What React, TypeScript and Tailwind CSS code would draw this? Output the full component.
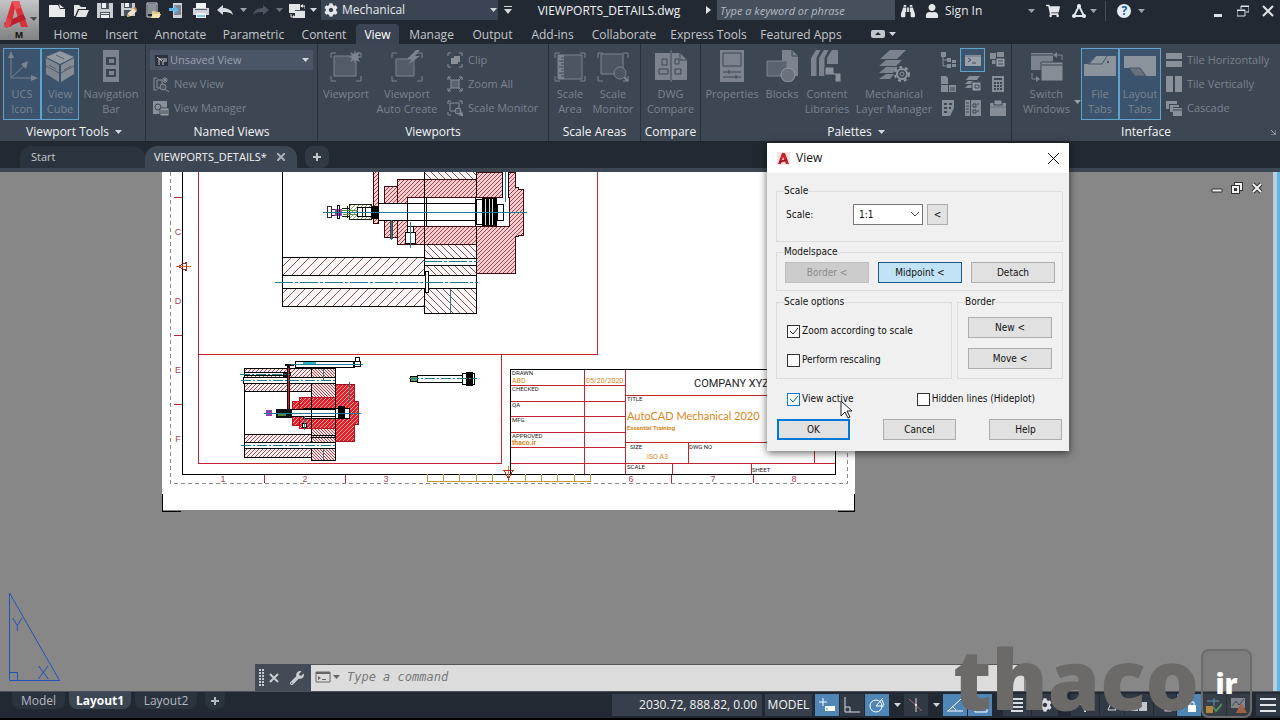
import React from 'react';
import { FaShoppingCart, FaUser, FaCog, FaWrench, FaBinoculars } from 'react-icons/fa';

type IconProps = { children: React.ReactNode; size?: number; className?: string };

function Icon({ children, size = 16, className = '' }: IconProps) {
  return (
    <svg
      width={size}
      height={size}
      viewBox={`0 0 ${size} ${size}`}
      fill="none"
      stroke="none"
      className={`shrink-0 ${className}`}
      aria-hidden="true"
    >
      {children}
    </svg>
  );
}

function Caret({ className = 'text-gray-300' }: { className?: string }) {
  return (
    <svg width="7" height="4" viewBox="0 0 7 4" className={`shrink-0 ${className}`} aria-hidden="true">
      <path d="M0 0h7L3.5 4z" fill="currentColor" />
    </svg>
  );
}

/* ---------- quick access icons ---------- */

const quickIcons: { label: string; icon: React.ReactNode }[] = [
  { label: 'New', icon: <path d="M0 3h9l2 4h5v8H0zM10 2l5 4h-4z" fill="#e8eaec" /> },
  { label: 'Open', icon: <path d="M1 3h5l2 2h5v2H5l-3 7H1zM6 8h10l-3 7H3z" fill="#e2e4e6" /> },
  {
    label: 'Save',
    icon: (
      <>
        <path d="M0 1h16v15H0z" fill="#c9ccd0" />
        <path d="M4 1h8v6H4zM3 10h10v6H3z" fill="#4a525e" />
        <path d="M5 1h4v5H5zM4 11h8v1H4zM4 13h8v3H4z" fill="#eceef0" />
      </>
    ),
  },
  {
    label: 'Save As',
    icon: (
      <>
        <path d="M0 1h14v13H0z" fill="#c9ccd0" />
        <path d="M3 1h8v5H3zM3 8h7v6H3z" fill="#4a525e" />
        <path d="M4 1h4v4H4z" fill="#eceef0" />
        <path d="M6 15l1-4 6-5 3 3-6 5z" fill="#f0e3cf" />
        <path d="M12 6l2-1 2 2-1 2z" fill="#e08a4a" />
        <path d="M6 15l1-3 2 2z" fill="#e0a13c" />
      </>
    ),
  },
  {
    label: 'Open from Web',
    icon: (
      <>
        <path d="M2 1h10v14H2z" stroke="#d8dadc" />
        <path d="M3 2h8v10H3z" fill="#8b9097" />
        <path d="M7 9h3l1 1h4v5H7z" fill="#e2c98c" />
        <path d="M8 12h8l-2 4H6z" fill="#f5e3a8" />
      </>
    ),
  },
  {
    label: 'Save to Web',
    icon: (
      <>
        <path d="M4 1h9v15H4z" fill="#cfd2d6" />
        <path d="M5 3h7v10H5z" fill="#7e858f" />
        <path d="M0 6h5V3l5 5-5 4V9H0z" fill="#63b3e8" />
      </>
    ),
  },
  {
    label: 'Plot',
    icon: (
      <>
        <path d="M3 1h10v5H3z" fill="#f0f1f2" />
        <path d="M0 6h16v7H0z" fill="#cfd2d6" />
        <path d="M2 7h12v1H2z" fill="#59616c" />
        <path d="M3 11h10v5H3z" fill="#e6f3fa" />
        <path d="M4 13h8v2H4z" fill="#8cc6e6" />
      </>
    ),
  },
  { label: 'Undo', icon: <path d="M0 8l6-5v3c5 0 9 2 10 7-3-3-6-3-10-3v3z" fill="#d9dce0" /> },
];

const redoIcon = <path d="M16 8l-6-5v3c-5 0-9 2-10 7 3-3 6-3 10-3v3z" fill="#4b5460" />;

const switchIcon = (
  <>
    <path d="M0 2h11v9H0zM6 8h10v8H6z" fill="#e2e4e6" />
    <path d="M6 8h10v1H6z" fill="#4a525e" />
    <path d="M12 4h4v3M2 12v3h3" stroke="#e2e4e6" />
    <path d="M14 2v4l-3-2zM4 13l3 2-3 2z" fill="#e2e4e6" />
  </>
);

function AppLogo() {
  return (
    <button
      aria-label="Application menu"
      className="h-10 w-[39px] self-start bg-gradient-to-b from-[#c4c5c6] to-[#808183]"
    >
      <svg width="39" height="40" viewBox="0 0 39 40" aria-hidden="true">
        <path d="M12 1h7l9 26h-7L15 8 11 27H4z" fill="#d9303a" />
        <path d="M12 1h7l2 7-6 1z" fill="#e9545a" />
        <path d="M4 23l19-9 3 5-20 9z" fill="#b81f2b" />
        <path d="M4 27l3-9 5 2-2 7z" fill="#e0434a" />
        <path d="M30 17h7l-3 4z" fill="#444a52" />
        <text x="19" y="38" textAnchor="middle" fontSize="9" fontWeight="700" fill="#111">
          M
        </text>
      </svg>
    </button>
  );
}

function TitleBar() {
  return (
    <header className="flex h-[22px] items-start">
      <div className="flex h-5 items-center pl-1.5">
        {quickIcons.map((q) => (
          <button key={q.label} aria-label={q.label} className="flex w-6 justify-center">
            <Icon>{q.icon}</Icon>
          </button>
        ))}
        <span className="flex w-3 justify-center"><Caret className="text-gray-400" /></span>
        <button aria-label="Redo" className="flex w-6 justify-center"><Icon>{redoIcon}</Icon></button>
        <span className="flex w-3 justify-center"><Caret className="text-gray-500" /></span>
        <button aria-label="Switch window" className="flex w-6 justify-center"><Icon>{switchIcon}</Icon></button>
        <span className="flex w-2 justify-center"><Caret /></span>
      </div>
      <label className="relative ml-1 flex h-5 w-[177px] items-center bg-[#3b4453] pl-[3px]">
        <FaCog size={14} className="text-gray-200" />
        <select
          aria-label="Workspace"
          className="h-5 flex-1 appearance-none bg-transparent pl-1 text-gray-200 outline-none"
        >
          <option>Mechanical</option>
        </select>
        <Caret className="pointer-events-none absolute right-px text-gray-300" />
      </label>
      <span className="flex h-5 w-5 items-center justify-center">
        <svg width="8" height="8" viewBox="0 0 8 8"><path d="M0 0h8v1H0zM0 3h8L4 8z" fill="#d3d6da" /></svg>
      </span>
      <h1 className="w-[182px] text-center leading-[22px] text-gray-100">VIEWPORTS_DETAILS.dwg</h1>
      <span className="flex h-5 w-[17px] items-center justify-center">
        <svg width="5" height="8" viewBox="0 0 5 8"><path d="M0 0l5 4-5 4z" fill="#e3e5e8" /></svg>
      </span>
      <input
        aria-label="Search"
        placeholder="Type a keyword or phrase"
        className="h-5 w-[178px] bg-[#46505c] px-[3px] text-[11px] italic outline-none placeholder:text-[#b4bac2]"
      />
      <div className="flex h-[21px] flex-1 items-center text-gray-200">
        <button aria-label="Find" className="flex w-[26px] justify-center"><FaBinoculars size={14} /></button>
        <button className="flex items-center gap-1.5 pl-1">
          <FaUser size={14} />
          Sign In
        </button>
        <span className="max-w-[46px] flex-1" />
        <Caret className="text-gray-400" />
        <button aria-label="App store" className="flex w-9 justify-center"><FaShoppingCart size={14} /></button>
        <button aria-label="Autodesk account" className="flex w-4 justify-center">
          <Icon>
            <path d="M8 3L3 13h10z" stroke="#d9e3ec" strokeWidth="2" />
            <circle cx="8" cy="3" r="2" fill="#e6edf3" />
            <circle cx="3" cy="13" r="2" fill="#e6edf3" />
            <circle cx="13" cy="13" r="2" fill="#e6edf3" />
          </Icon>
        </button>
        <span className="flex w-3 justify-center"><Caret className="text-gray-400" /></span>
        <span className="ml-1.5 h-5 w-px bg-[#454d58]" />
        <button
          aria-label="Help"
          className="ml-[11px] h-3.5 w-3.5 rounded-full bg-[#e6eef5] text-center text-xs leading-[14px] font-bold text-[#245a8c]"
        >
          ?
        </button>
        <span className="flex w-5 justify-center"><Caret className="text-gray-400" /></span>
        <div className="ml-auto flex">
          <button aria-label="Minimize" className="flex w-[25px] justify-center">
            <Icon size={12}><path d="M2 9h8v3H2z" fill="#dfe2e5" /></Icon>
          </button>
          <button aria-label="Restore" className="flex w-[25px] justify-center">
            <Icon size={12}>
              <path d="M4 4V1h8v6H9M0 5h8v6H0z" stroke="#dfe2e5" />
              <path d="M4 1h8v1H4zM0 5h8v1H0z" fill="#dfe2e5" />
            </Icon>
          </button>
          <button aria-label="Close" className="flex w-[25px] justify-center">
            <Icon size={12}><path d="M1 1l10 10M11 1L1 11" stroke="#dfe2e5" strokeWidth="2" /></Icon>
          </button>
        </div>
      </div>
    </header>
  );
}

const menuTabs: { label: string; width: string }[] = [
  { label: 'Home', width: 'w-[53px]' },
  { label: 'Insert', width: 'w-[49px]' },
  { label: 'Annotate', width: 'w-[69px]' },
  { label: 'Parametric', width: 'w-[77px]' },
  { label: 'Content', width: 'w-[64px]' },
  { label: 'View', width: 'w-[43px]' },
  { label: 'Manage', width: 'w-[65px]' },
  { label: 'Output', width: 'w-[57px]' },
  { label: 'Add-ins', width: 'w-[63px]' },
  { label: 'Collaborate', width: 'w-[80px]' },
  { label: 'Express Tools', width: 'w-[89px]' },
  { label: 'Featured Apps', width: 'w-[96px]' },
];

function MenuTabs() {
  return (
    <nav className="flex h-[22px] items-end pl-[5px]">
      {menuTabs.map((t) => (
        <button
          key={t.label}
          className={`h-5 shrink-0 rounded-t-sm pt-0.5 text-center leading-[18px] whitespace-nowrap ${t.width} ${
            t.label === 'View' ? 'bg-[#3b4453] text-white' : 'text-[#c3c7cc]'
          }`}
        >
          {t.label}
        </button>
      ))}
      <button aria-label="Minimize ribbon" className="ml-[22px] flex h-5 items-center gap-1">
        <svg width="14" height="8" viewBox="0 0 14 8">
          <rect width="14" height="8" rx="2" fill="#c3c7cc" />
          <path d="M4 5h6L7 2z" fill="#222a33" />
        </svg>
        <Caret />
      </button>
    </nav>
  );
}

/* ---------- ribbon icons ---------- */

const BRACKETS = 'M1 8V3h5M26 3h5v5M31 26v5h-5M6 31H1v-5';

const ucsIcon = (
  <>
    <path d="M5 4v24h24M6 27l14-13" stroke="currentColor" />
    <path d="M2 8l3-7 3 7zM25 25l7 3-7 3zM15 14l7-3-2 8z" fill="currentColor" />
  </>
);
const cubeIcon = (
  <>
    <path d="M16 1l14 6-14 7L2 7z" fill="#9298a0" />
    <path d="M2 8l13 7v17L2 24z" fill="#7f8690" />
    <path d="M30 8l-13 7v17l13-8z" fill="#858c96" />
    <path d="M12 5l8 4M5 15l7 4M20 20l7-4M2 16l13 7M17 23l13-7" stroke="#565e6a" />
  </>
);
const navBarIcon = (
  <>
    <path d="M8 0h16v32H8z" fill="currentColor" />
    <path d="M11 7h10v8H11zM11 19h10v8H11z" fill="#3d4653" />
    <path d="M14 9h5v4h-5zM14 21h5v4h-5z" fill="currentColor" />
  </>
);
const viewportIcon = (
  <>
    <path d={BRACKETS} stroke="currentColor" />
    <path d="M4 6h22v20H4z" fill="#535b68" stroke="currentColor" />
    <path d="M25 0l1 4 4-2-2 4 4 1-4 1 2 4-4-2-1 4-1-4-4 2 2-4-4-1 4-1-2-4 4 2z" fill="currentColor" />
  </>
);
const viewportAutoIcon = (
  <>
    <path d={BRACKETS} stroke="currentColor" />
    <path d="M5 9h18v17H5z" fill="#535b68" stroke="currentColor" />
    <path d="M25 0l-9 9h5l-4 6 12-9h-5l5-6z" fill="currentColor" />
  </>
);
const scaleAreaIcon = (
  <>
    <path d={BRACKETS} stroke="currentColor" />
    <path d="M4 5h24v24H4z" fill="#4d5562" stroke="currentColor" />
    <path d="M4 5h6v24H4z" fill="currentColor" />
    <path d="M7 8h3M5 11h5M7 14h3M5 17h5M7 20h3M5 23h5M7 26h3" stroke="#3d4653" />
  </>
);
const scaleMonitorIcon = (
  <>
    <path d={BRACKETS} stroke="currentColor" />
    <path d="M4 4h22v20H4z" fill="#4d5562" stroke="currentColor" />
    <circle cx="23" cy="23" r="6" fill="#4d5562" stroke="currentColor" />
    <path d="M27 27l4 4" stroke="currentColor" strokeWidth="2" />
  </>
);
const compareIcon = (
  <>
    <path d="M0 3h15v27H0zM17 3h8l7 7v20H17z" fill="currentColor" />
    <path d="M16 0v32" stroke="currentColor" />
    <path d="M7 9h5v6H7zM4 19h9v5H4zM20 9h4v5h-4zM20 19h6v5h-6z" stroke="#3d4653" />
    <path d="M25 3v7h7" stroke="#3d4653" />
  </>
);
const propertiesIcon = (
  <>
    <path d="M4 0h24v32H4z" fill="currentColor" />
    <path d="M7 3h18v13H7zM7 22h18M7 27h18M13 20v4M20 25v4" stroke="#3d4653" />
  </>
);
const blocksIcon = (
  <>
    <path d="M16 0h10l6 6v20H16z" fill="currentColor" />
    <path d="M1 11h20v15H1z" fill="#5b6370" stroke="currentColor" />
    <circle cx="22" cy="25" r="7" fill="#6b727e" stroke="#9399a2" />
    <path d="M26 0v6h6" stroke="#3d4653" />
  </>
);
const contentIcon = (
  <>
    <path d="M0 8l5-8h5L6 8v18H0zM8 8l5-8h5l-4 8v18H8zM16 8l5-8h6v14H16z" fill="currentColor" />
    <path d="M6 26V8l4-8M14 26V8l4-8" stroke="#3d4653" />
    <path d="M14 17h9v6h7v9h-6v-7h-10z" fill="#8b919b" stroke="#3d4653" />
  </>
);
const layerMgrIcon = (
  <>
    <path d="M12 0h16l-9 9H2zM8 10h16l-6 6H1zM8 17h12l-5 6H1zM8 24h8l-4 5H1z" fill="currentColor" />
    <circle cx="24" cy="24" r="5" stroke="#9096a0" strokeWidth="2" fill="#3d4653" />
    <circle cx="24" cy="24" r="7" stroke="#9096a0" strokeWidth="2" strokeDasharray="3 3" />
    <circle cx="24" cy="24" r="2" stroke="#9096a0" />
  </>
);
const windowsIcon = (
  <>
    <path d="M0 3h22v17H0z" fill="currentColor" />
    <path d="M10 12h22v19H10z" fill="#868d97" stroke="#3d4653" />
    <path d="M0 5h22M11 15h20" stroke="#3d4653" />
    <path d="M24 5h7v5M1 23v6h6" stroke="currentColor" />
    <path d="M26 2v6l-4-3zM5 26l4 3-4 3z" fill="currentColor" />
  </>
);
const fileTabsIcon = (
  <>
    <path d="M0 14h4l8-8h20v20H0z" fill="#8b939d" />
    <path d="M4 14h14l5-8M12 6l-7 8" stroke="#46566a" />
    <circle cx="24" cy="12" r="1" fill="#2f3946" />
  </>
);
const layoutTabsIcon = (
  <>
    <path d="M0 6h32v20H22l-6-8H0z" fill="#8b939d" />
    <path d="M5 18l6 8h11l-6-8z" fill="#68727f" stroke="#46566a" />
  </>
);

type BigButtonProps = {
  icon: React.ReactNode;
  lines: string[];
  width: string;
  active?: boolean;
};

function BigButton({ icon, lines, width, active = false }: BigButtonProps) {
  return (
    <button
      className={`flex h-[72px] shrink-0 flex-col items-center gap-1 border pt-px ${width} ${
        active ? 'border-[#5fa3cf] bg-[#3b536c]' : 'border-transparent'
      }`}
    >
      <Icon size={32} className="text-[#7c838e]">{icon}</Icon>
      <span className="text-[11px] leading-[15px] whitespace-nowrap text-[#7b838e]">
        {lines.map((l) => (
          <span key={l} className="block text-center">{l}</span>
        ))}
      </span>
    </button>
  );
}

function SmallButton({ icon, label }: { icon: React.ReactNode; label: string }) {
  return (
    <button className="flex h-6 items-center gap-[5px] text-[11px] whitespace-nowrap text-[#7b838e]">
      <Icon className="text-[#8a909a]">{icon}</Icon>
      {label}
    </button>
  );
}

const SMALL_BRACKETS = 'M1 4V1h3M12 1h3v3M15 12v3h-3M4 15H1v-3';

const clipIcon = (
  <>
    <path d={SMALL_BRACKETS} stroke="currentColor" />
    <path d="M4 6h3V4h6v6h-2v2H4z" fill="currentColor" />
  </>
);
const zoomAllIcon = (
  <>
    <path d="M4 4h8v8H4z" fill="#5b6370" stroke="currentColor" />
    <path d="M1 1l3 3M15 1l-3 3M1 15l3-3M15 15l-3-3" stroke="currentColor" />
    <path d={SMALL_BRACKETS} stroke="currentColor" />
  </>
);
const monitorIcon = (
  <>
    <path d={SMALL_BRACKETS} stroke="currentColor" />
    <path d="M3 3h9v8H3z" stroke="currentColor" />
    <circle cx="11" cy="11" r="3" fill="#4d5562" stroke="currentColor" />
    <path d="M13 13l3 3" stroke="currentColor" strokeWidth="2" />
  </>
);
const newViewIcon = (
  <>
    <path d="M4 2H1v12h3M4 4h5v8H4z" stroke="currentColor" />
    <circle cx="10" cy="11" r="3" fill="#4d5562" stroke="currentColor" />
    <path d="M12 13l4 3M12 1v6M9 4h6M10 2l4 4M14 2l-4 4" stroke="currentColor" />
  </>
);
const viewMgrIcon = (
  <>
    <path d="M0 1h14v7H8v6H0z" fill="currentColor" />
    <circle cx="5" cy="7" r="3" stroke="#3d4653" />
    <path d="M7 8h9v8H7z" fill="#9aa0a8" stroke="#3d4653" />
    <path d="M8 11h7M8 13h7" stroke="#3d4653" />
  </>
);
const tileHIcon = <path d="M0 1h16v6H0zM0 9h16v6H0z" fill="currentColor" />;
const tileVIcon = <path d="M0 0h7v16H0zM9 0h7v16H9z" fill="currentColor" />;
const cascadeIcon = (
  <>
    <path d="M0 1h11v3H3v5H0z" fill="currentColor" />
    <path d="M4 5h9v2H7v5H4zM7 8h9v8H7z" fill="currentColor" />
    <path d="M7 10h9" stroke="#3d4653" />
  </>
);

const paletteIcons: { label: string; icon: React.ReactNode }[] = [
  {
    label: 'Mechanical Browser',
    icon: (
      <>
        <path d="M1 0h5v5H1zM7 6h4v4H7zM12 8h4v3h-4zM7 12h4v4H7zM12 12h4v3h-4z" fill="currentColor" />
        <path d="M3 5v9h4M3 8h4" stroke="currentColor" />
      </>
    ),
  },
  {
    label: 'Command Line',
    icon: (
      <>
        <path d="M0 3h16v11H0z" fill="#9aa1aa" />
        <path d="M0 4h16" stroke="#6d7580" />
        <path d="M3 6l3 2-3 2M7 11h4" stroke="#3b4a5c" />
      </>
    ),
  },
  {
    label: 'Block Palette',
    icon: (
      <>
        <path d="M0 1h6v6H0zM7 0h7v5H7zM2 8h4v4H2z" fill="currentColor" />
        <path d="M6 6h9v9H6z" fill="#969ca5" stroke="#3d4653" />
        <path d="M8 9h5M8 12h5" stroke="#3d4653" />
      </>
    ),
  },
  {
    label: 'Design Center',
    icon: (
      <>
        <path d="M1 0h5l2 2v6H1zM1 9h7v7H1zM9 9h7v7H9z" fill="currentColor" />
        <path d="M10 12h5M10 14h5" stroke="#3d4653" />
      </>
    ),
  },
  {
    label: 'Layer Properties',
    icon: (
      <>
        <path d="M4 0h11l-3 4H1zM3 5h6l-2 3H0zM3 9h4v3H0z" fill="currentColor" />
        <path d="M7 6h9v9H7z" fill="#969ca5" stroke="#3d4653" />
        <path d="M10 9h4v3h-4z" stroke="#3d4653" />
      </>
    ),
  },
  {
    label: 'Calculator',
    icon: (
      <>
        <path d="M2 0h12v16H2z" fill="currentColor" />
        <path d="M4 3h8M4 7h2M7 7h2M10 7h2M4 10h2M7 10h2M10 10h2M4 13h2M7 13h2M10 13h2" stroke="#3d4653" strokeWidth="2" />
      </>
    ),
  },
  {
    label: 'Sheet Set Manager',
    icon: (
      <>
        <path d="M2 0h12v8l-4 8H2z" fill="currentColor" />
        <path d="M4 4h3M9 4h3M4 8h3M9 8h2M4 12h3" stroke="#3d4653" strokeWidth="2" />
      </>
    ),
  },
  {
    label: 'Tool Palettes',
    icon: (
      <>
        <path d="M0 0h5v16H0zM6 0h10v16H6z" fill="currentColor" />
        <path d="M1 3h3M1 6h3M1 9h3M1 12h3M8 4h3v3H8zM12 4h2M8 10h3v3H8zM12 11h2" stroke="#3d4653" />
      </>
    ),
  },
  {
    label: 'Markup Set Manager',
    icon: (
      <>
        <path d="M0 3h16v13H0z" fill="currentColor" />
        <path d="M4 0h8v5H4z" fill="#8a909a" stroke="#3d4653" />
        <path d="M0 7h16" stroke="#6b727e" />
      </>
    ),
  },
];

type PanelProps = {
  title: string;
  width: string;
  menu?: boolean;
  children: React.ReactNode;
};

function Panel({ title, width, menu = false, children }: PanelProps) {
  return (
    <section className={`flex flex-col border-r border-[#2a313c] pt-1 ${width}`}>
      <div className="flex h-[72px] shrink-0">{children}</div>
      <h2 className="flex flex-1 items-center justify-center gap-1.5 pt-0.5 whitespace-nowrap text-gray-100">
        {title}
        {menu && <Caret />}
      </h2>
    </section>
  );
}

function Ribbon() {
  return (
    <div className="flex h-[97px] bg-[#3d4653]">
      <Panel title="Viewport Tools" menu width="w-[146px] shrink-0 pl-[3px]">
        <BigButton icon={ucsIcon} lines={['UCS', 'Icon']} width="w-[38px]" active />
        <BigButton icon={cubeIcon} lines={['View', 'Cube']} width="w-[38px]" active />
        <BigButton icon={navBarIcon} lines={['Navigation', 'Bar']} width="w-16" />
      </Panel>
      <Panel title="Named Views" width="w-[172px] shrink-0 px-1">
        <div className="flex flex-1 flex-col">
          <label className="relative flex h-6 items-center">
            <Icon className="pointer-events-none absolute left-1 text-[#c9cdd2]">
              <path d="M1 3h13v11H1z" fill="#2a313b" />
              <path d="M3 5l5 4M5 13V7h8M9 13V9h4" stroke="currentColor" />
            </Icon>
            <select
              aria-label="Saved views"
              className="h-5 w-full appearance-none bg-[#4a5666] pl-5 text-[11px] text-[#9aa1ab] outline-none"
            >
              <option>Unsaved View</option>
            </select>
            <Caret className="pointer-events-none absolute right-1 text-gray-300" />
          </label>
          <div className="pl-[3px]">
            <SmallButton icon={newViewIcon} label="New View" />
            <SmallButton icon={viewMgrIcon} label="View Manager" />
          </div>
        </div>
      </Panel>
      <Panel title="Viewports" width="w-[231px] shrink-0">
        <BigButton icon={viewportIcon} lines={['Viewport']} width="w-14" />
        <BigButton icon={viewportAutoIcon} lines={['Viewport', 'Auto Create']} width="w-[66px]" />
        <div className="pl-[7px]">
          <SmallButton icon={clipIcon} label="Clip" />
          <SmallButton icon={zoomAllIcon} label="Zoom All" />
          <SmallButton icon={monitorIcon} label="Scale Monitor" />
        </div>
      </Panel>
      <Panel title="Scale Areas" width="w-[92px] shrink-0">
        <BigButton icon={scaleAreaIcon} lines={['Scale', 'Area']} width="w-[42px]" />
        <BigButton icon={scaleMonitorIcon} lines={['Scale', 'Monitor']} width="w-11" />
      </Panel>
      <Panel title="Compare" width="w-[60px] shrink-0">
        <BigButton icon={compareIcon} lines={['DWG', 'Compare']} width="w-[59px]" />
      </Panel>
      <Panel title="Palettes" menu width="w-[311px] shrink-0">
        <BigButton icon={propertiesIcon} lines={['Properties']} width="w-[62px]" />
        <BigButton icon={blocksIcon} lines={['Blocks']} width="w-[38px]" />
        <BigButton icon={contentIcon} lines={['Content', 'Libraries']} width="w-[52px]" />
        <BigButton icon={layerMgrIcon} lines={['Mechanical', 'Layer Manager']} width="w-[82px]" />
        <div className="grid grid-cols-3">
          {paletteIcons.map((p) => (
            <button
              key={p.label}
              aria-label={p.label}
              className={`flex h-6 w-[25px] items-center justify-center border ${
                p.label === 'Command Line' ? 'border-[#5fa3cf] bg-[#3b536c]' : 'border-transparent'
              }`}
            >
              <Icon className="text-[#868d97]">{p.icon}</Icon>
            </button>
          ))}
        </div>
      </Panel>
      <Panel title="Interface" width="relative flex-1 border-r-0">
        <BigButton icon={windowsIcon} lines={['Switch', 'Windows']} width="w-[69px]" />
        <BigButton icon={fileTabsIcon} lines={['File', 'Tabs']} width="w-[38px]" active />
        <BigButton icon={layoutTabsIcon} lines={['Layout', 'Tabs']} width="w-[42px]" active />
        <div className="pl-[5px]">
          <SmallButton icon={tileHIcon} label="Tile Horizontally" />
          <SmallButton icon={tileVIcon} label="Tile Vertically" />
          <SmallButton icon={cascadeIcon} label="Cascade" />
        </div>
        <svg width="5" height="5" viewBox="0 0 5 5" className="absolute right-1 bottom-1.5">
          <path d="M0 0l4 4M5 0v5H0" stroke="#aab0b8" fill="none" />
        </svg>
        <Caret className="absolute top-14 left-[62px] text-gray-400" />
      </Panel>
    </div>
  );
}

function FileTabs() {
  return (
    <div className="flex h-[31px] items-end border-b-4 border-[#3d4653] bg-[#222932] pl-5">
      <button className="h-[22px] w-[125px] rounded-t-xl bg-[#2b333e] pl-[11px] text-left text-[11px] leading-[22px] text-[#c3c7cc]">
        Start
      </button>
      <div className="flex h-[22px] w-[152px] items-center rounded-t-xl bg-[#3d4653] pl-[9px]">
        <button className="text-[11px] leading-[22px] text-gray-100">VIEWPORTS_DETAILS*</button>
        <button aria-label="Close drawing" className="ml-2.5">
          <Icon size={8}><path d="M0 0l8 8M8 0L0 8" stroke="#a9afb7" strokeWidth="2" /></Icon>
        </button>
      </div>
      <button aria-label="New drawing" className="ml-2 flex h-[22px] w-6 items-center justify-center rounded-lg bg-[#313944]">
        <Icon size={8}><path d="M4 0v8M0 4h8" stroke="#c3c7cc" strokeWidth="2" /></Icon>
      </button>
    </div>
  );
}

/* ---------- paper space ---------- */

const ORANGE = '#d8861a';
const RED = '#c4242e';
const TEAL = '#1f7f92';

const rowLabels: [string, number][] = [['C', 235], ['D', 304], ['E', 373], ['F', 442]];
const columnLabels: [string, number][] = [['1', 223], ['2', 305], ['3', 386], ['6', 631], ['7', 713], ['8', 794]];
const blockLabels: [string, number, number][] = [
  ['DRAWN', 512, 375],
  ['CHECKED', 512, 391],
  ['QA', 512, 407],
  ['MFG', 512, 422],
  ['APPROVED', 512, 438],
  ['TITLE', 627, 401],
  ['SIZE', 630, 449],
  ['DWG NO', 689, 449],
  ['SCALE', 627, 469],
  ['SHEET', 752, 472],
];

function MainAssembly() {
  return (
    <g>
      <path d="M282.5 172v134" stroke="#000" />
      <path d="M282.5 257.5h142v49h-142z" fill="url(#hatchWide)" stroke="#000" />
      <path d="M424.5 172v141.5h52V172" fill="url(#hatchBack)" stroke="#000" />
      <path d="M282.5 275.5h194v13h-194zM424.5 258.5h52v7h-52z" fill="#fff" stroke="#000" />
      <path d="M425.5 271.5h3v21h-3z" fill="#fff" stroke="#000" />
      <path d="M476.5 172v101.5h39v-37h3v-1h5v-46h-5v-2h-3V172z" fill="url(#hatchDense)" stroke="#400a10" />
      <path d="M397.5 179.5h79v65h-79z" fill="url(#hatchDense)" stroke="#400a10" />
      <path d="M384.5 186.5h13v51h-13z" fill="url(#hatchDense)" stroke="#400a10" />
      <path d="M424.5 172v73M476.5 172v101" stroke="#000" />
      <path d="M407.5 197.5h102v29h-102z" fill="#fff" stroke="#400a10" />
      <path d="M378.5 203.5h97v17h-97z" fill="#fff" stroke="#000" />
      <path d="M407.5 203v17M424.5 197v29M426.5 197v29M475.5 197v29" stroke="#000" />
      <path d="M476.5 199.5h6v25h-6zM497.5 204.5h6v16h-6z" fill="#fff" stroke="#000" />
      <path d="M482 198h15v28h-15z" fill="#000" />
      <path d="M485.5 199v26M489.5 199v26M492.5 199v26" stroke="#ddd" />
      <path d="M503 172h5v26h-5z" fill="#fff" />
      <path d="M502.5 172v25M508.5 172v25" stroke="#000" />
      <path d="M505.5 172v30" stroke={TEAL} />
      {/* locking screws */}
      <path d="M390 221h3v18h-3z" fill="#444" />
      <path d="M405.5 232.5h10v11h-10zM407.5 226.5h6v6h-6z" fill="#fff" stroke="#000" />
      <path d="M410.5 222v26M391.5 220v20M450.5 289v24" stroke={TEAL} />
      {/* lever */}
      <path d="M373.5 172v51.5h5V172" fill="url(#hatchDense)" stroke="#300" />
      <path d="M371 206h8v13h-8z" fill="#000" />
      {/* indexing plunger */}
      <path d="M327.5 206.5h4v11h-4zM331 209.5h6M331 215.5h6" stroke="#3a1f57" />
      <path d="M335 209h7v7h-7z" fill="#a244c4" />
      <path d="M337.5 205.5h2v13h-2z" stroke="#111" />
      <path d="M349.5 204.5h22v15h-22z" fill="url(#hatchGreen)" stroke="#16220f" />
      <path d="M357.5 207.5h14v9h-14z" fill="#fff" stroke="#000" />
      <path d="M342 208.5h8M342 216.5h8M347.5 206v12M362.5 207v10M365.5 207v10" stroke="#16220f" />
      <path d="M341 210h17v1h-17zM343 214h14v1h-14z" fill="#5b9140" />
      <path d="M323 212.5h204" stroke={TEAL} />
      <path d="M275 282.5h203M424 261.5h53" stroke={TEAL} strokeDasharray="18 2 3 2" />
    </g>
  );
}

function SmallAssembly() {
  return (
    <g>
      <path d="M244.5 368.5v89" stroke="#000" />
      <path d="M244.5 368.5h67v23h-67zM244.5 434.5h67v23h-67z" fill="url(#hatchMid)" stroke="#000" />
      <path d="M311.5 368.5h24v92h-24z" fill="url(#hatchMidBack)" stroke="#000" />
      <path d="M243.5 377.5h92v6h-92zM244.5 442.5h91v6h-91zM244.5 372.5h46v3h-46z" fill="#fff" stroke="#000" />
      <path d="M335.5 384.5h19v17h4v23h-4v17h-19z" fill="url(#hatchRed)" stroke="#a01020" />
      <path d="M299.5 397.5h36v31h-36zM292.5 401.5h7v24h-7z" fill="url(#hatchRed)" stroke="#c01020" />
      <path d="M303.5 408.5h46v10h-46z" fill="#fff" stroke="#000" />
      <path d="M291.5 409.5h44v7h-44z" fill="#fff" stroke="#000" />
      <path d="M311.5 397v31M335.5 384v57M311.5 437.5h24M312 435.5h24" stroke="#000" />
      <path d="M338 406h7v13h-7z" fill="#000" />
      <path d="M288.5 366v46" stroke="#2a0508" strokeWidth="3" />
      <path d="M288.5 368v42" stroke={RED} />
      <path d="M285 364h9v2h-9zM276 409h16v9h-16zM283 373h5v5h-5z" fill="#111" />
      <path d="M278 413h8v3h-8z" fill="#4c8438" />
      <path d="M266 410h6v6h-6z" fill="#9440b4" />
      <path d="M295.5 361.5h59v6h-59zM353.5 361.5h7v5h-7zM355.5 357.5h4v4h-4z" fill="#fff" stroke="#000" />
      <path d="M303 362h13v3h-13z" fill="#27b3c4" />
      <path d="M302.5 423.5h4v4h-4z" fill="#fff" stroke="#000" />
      <path d="M264 413.5h97M291 364.5h72M304.5 416v14M323.5 369v11M323.5 450v10M349.5 382v20" stroke={TEAL} />
      <path d="M241 380.5h96M241 445.5h96M240 374.5h50" stroke={TEAL} strokeDasharray="10 2 2 2" />
      {/* detached pin */}
      <path d="M410.5 376.5h7v5h-7z" fill="#5ba06a" stroke="#000" />
      <path d="M417.5 375.5h45v7h-45zM462.5 373.5h12v11h-12z" fill="#fff" stroke="#000" />
      <path d="M466 372h7v14h-7z" fill="#000" />
      <path d="M409 378.5h68" stroke={TEAL} strokeDasharray="10 2 2 2" />
    </g>
  );
}

function Drawing() {
  return (
    <svg width="880" height="519" viewBox="0 172 880 519" className="block" shapeRendering="crispEdges" fill="none">
      <defs>
        <pattern id="hatchWide" width="9" height="9" patternUnits="userSpaceOnUse">
          <rect width="9" height="9" fill="#fffafa" />
          <path d="M-1 10L10 -1M-1 1l2-2M8 10l2-2" stroke="#a04850" />
        </pattern>
        <pattern id="hatchBack" width="7" height="7" patternUnits="userSpaceOnUse">
          <rect width="7" height="7" fill="#fffafa" />
          <path d="M-1 -1L8 8M6 -1l2 2M-1 6l2 2" stroke="#a04850" />
        </pattern>
        <pattern id="hatchDense" width="4" height="4" patternUnits="userSpaceOnUse">
          <rect width="4" height="4" fill="#f6d2d4" />
          <path d="M-1 5L5 -1M-1 1l2-2M3 5l2-2" stroke="#c03a46" />
        </pattern>
        <pattern id="hatchGreen" width="4" height="4" patternUnits="userSpaceOnUse">
          <rect width="4" height="4" fill="#fff" />
          <path d="M-1 5L5 -1" stroke="#8fa860" />
        </pattern>
        <pattern id="hatchMid" width="4" height="4" patternUnits="userSpaceOnUse">
          <rect width="4" height="4" fill="#fdf0f0" />
          <path d="M-1 5L5 -1M-1 1l2-2M3 5l2-2" stroke="#b04850" />
        </pattern>
        <pattern id="hatchMidBack" width="3" height="3" patternUnits="userSpaceOnUse">
          <rect width="3" height="3" fill="#fae6e6" />
          <path d="M-1 -1L4 4M2 -1l2 2M-1 2l2 2" stroke="#b04850" />
        </pattern>
        <pattern id="hatchRed" width="4" height="4" patternUnits="userSpaceOnUse">
          <rect width="4" height="4" fill="#e31f2a" />
          <path d="M-1 5L5 -1" stroke="#f7a8a4" />
        </pattern>
      </defs>

      {/* sheet */}
      <path d="M162 172h693v338H162z" fill="#fff" />
      <path d="M162.5 494v17.5h18M838 511.5h16.5V494" stroke="#000" />
      <path d="M170.5 172v311.5h677V172" stroke="#8a8a8a" strokeDasharray="4 3" />
      <path d="M182.5 172v302.5h653V172" stroke="#000" />

      {/* viewport frames */}
      <path d="M198.5 172v291.5h303v-109M198.5 354.5h399V172" stroke={RED} />

      {/* zone marks */}
      <path d="M174 197.5h8M174 335.5h8M174 404.5h8M264.5 475v8M345.5 475v8M671.5 475v8M753.5 475v8" stroke="#b02a38" />
      <g fill="#b0404a" fontSize="9" fontFamily="'Liberation Sans', sans-serif" textAnchor="middle">
        {rowLabels.map(([t, y]) => <text key={t} x="178" y={y}>{t}</text>)}
        {columnLabels.map(([t, x]) => <text key={t} x={x} y="482">{t}</text>)}
      </g>
      <path
        d="M427.5 474v7.5h163V474M443.5 474v7M459.5 474v7M476.5 474v7M492.5 474v7M508.5 474v7M525.5 474v7M541.5 474v7M557.5 474v7M574.5 474v7"
        stroke="#c79a2c"
      />
      <path d="M176 266.5h15" stroke="#f07020" />
      <path d="M178 266.5l8.5-4v8z" stroke="#a03020" />
      <path d="M508.5 466v15" stroke="#f07020" />
      <path d="M504 470.5h9l-4.5 8z" stroke="#c03020" />

      <MainAssembly />
      <SmallAssembly />

      {/* title block */}
      <path
        d="M510 385.5h115M510 401.5h115M510 416.5h115M510 432.5h115M510 447.5h115M510 463.5h325M625 395.5h210M625 442.5h210M584.5 370v104M625.5 370v104M688.5 442v21M814.5 442v21M672.5 463v11M751.5 463v11"
        stroke={RED}
      />
      <path d="M510.5 474V369.5H835" stroke="#000" />
      <g fontFamily="Roboto, sans-serif" fill="#222">
        <g fontSize="6">
          {blockLabels.map(([t, x, y]) => <text key={t} x={x} y={y}>{t}</text>)}
        </g>
        <text x="694" y="387" fontSize="11">COMPANY XYZ</text>
        <g fill={ORANGE}>
          <text x="627" y="420" fontSize="11" fontFamily="Lato, sans-serif">AutoCAD Mechanical 2020</text>
          <g fontSize="7">
            <text x="512" y="383">ABD</text>
            <text x="586" y="383">05/20/2020</text>
            <text x="627" y="430" fontWeight="700" fontSize="6">Essential Training</text>
            <text x="512" y="445" fontWeight="700">thaco.ir</text>
            <text x="647" y="459">ISO A3</text>
          </g>
        </g>
      </g>

      {/* UCS icon */}
      <path d="M9.5 593v87.5h50zM9.5 672.5h8v8" stroke="#2353b8" shapeRendering="auto" />
      <g fill="#2353b8" fontSize="18" fontFamily="Lato, sans-serif" fontWeight="300" textAnchor="middle">
        <text x="17" y="631">Y</text>
        <text x="43" y="679">X</text>
      </g>
    </svg>
  );
}

function CommandLine() {
  return (
    <div className="absolute right-64 bottom-0 left-[255px] flex h-[27px] bg-[#dcdcdc]">
      <div className="flex w-14 items-center bg-[#444b56] pl-1">
        <svg width="5" height="18" viewBox="0 0 5 18">
          <path d="M1 0v18M4 0v18" stroke="#c8ccd1" strokeWidth="2" strokeDasharray="2 1" />
        </svg>
        <button aria-label="Close command line" className="ml-[5px]">
          <Icon size={10}><path d="M1 1l8 8M9 1L1 9" stroke="#c8ccd1" strokeWidth="2" /></Icon>
        </button>
        <button aria-label="Customize" className="ml-[11px]"><FaWrench size={14} className="text-[#c8ccd1]" /></button>
      </div>
      <div className="flex flex-1 items-center gap-0.5 border-t border-[#555] pb-0.5 pl-1">
        <Icon>
          <path d="M1 3h14v10H1z" stroke="#666" />
          <path d="M1 3h14v2H1zM3 7l3 2-3 2zM7 10h4v1H7z" fill="#666" />
        </Icon>
        <Caret className="text-[#666]" />
        <input
          aria-label="Command"
          placeholder="Type a command"
          className="flex-1 pl-[5px] font-['DejaVu_Sans_Mono',monospace] text-xs italic outline-none placeholder:text-[#777]"
        />
      </div>
    </div>
  );
}

function Canvas() {
  return (
    <main className="relative flex-1 bg-[#878787]">
      <Drawing />
      <div className="absolute top-2.5 right-[17px] flex gap-2">
        <button aria-label="Minimize drawing">
          <Icon size={12}><path d="M1 7h10v3H1z" fill="#f2f2f2" stroke="#333" /></Icon>
        </button>
        <button aria-label="Restore drawing">
          <Icon size={12}>
            <path d="M3 0h9v9H9v3H0V3h3z" fill="#333" />
            <path d="M4 1h7v7H9V3H4zM1 4h7v7H1z" fill="#f2f2f2" />
            <path d="M3 6h3v3H3z" fill="#333" />
          </Icon>
        </button>
        <button aria-label="Close view">
          <Icon size={12}>
            <path d="M2 2l8 8M10 2l-8 8" stroke="#333" strokeWidth="4" />
            <path d="M2 2l8 8M10 2l-8 8" stroke="#f2f2f2" strokeWidth="2" />
          </Icon>
        </button>
      </div>
      <div className="absolute inset-y-0 right-0 w-[7px] border-l-4 border-[#b9cfe0] bg-[#5db7e2]" />
      <CommandLine />
    </main>
  );
}

/* ---------- status bar ---------- */

const layoutTabs = [
  { label: 'Model', width: 'w-[53px]' },
  { label: 'Layout1', width: 'w-[62px]' },
  { label: 'Layout2', width: 'w-[62px]' },
];

type Toggle = { label: string; on?: boolean; caret?: boolean; width: string; icon: React.ReactNode };

const toggles: Toggle[] = [
  {
    label: 'Dynamic input',
    on: true,
    width: 'w-6',
    icon: (
      <>
        <path d="M4 1v8M0 5h8" stroke="#fff" />
        <path d="M6 9h10v5H6z" fill="#fff" />
        <path d="M8 11v2" stroke="#4f86b5" />
      </>
    ),
  },
  { label: 'Ortho mode', width: 'w-6', icon: <path d="M1 0v15h15M1 10h5v5" stroke="#d9dce0" /> },
  {
    label: 'Polar tracking',
    on: true,
    caret: true,
    width: 'w-6',
    icon: (
      <>
        <circle cx="7" cy="9" r="6" stroke="#fff" />
        <path d="M7 9h8M7 9l7-8M13 3l2 5" stroke="#fff" />
      </>
    ),
  },
  {
    label: 'Isometric drafting',
    caret: true,
    width: 'w-6',
    icon: (
      <>
        <path d="M8 1v14" stroke="#d9dce0" />
        <path d="M1 2l13 12" stroke="#a06a70" />
        <circle cx="8" cy="8" r="1" fill="#fff" />
      </>
    ),
  },
  { label: 'Object snap tracking', on: true, width: 'w-6', icon: <path d="M0 14h16M1 14L14 2M5 9l4 4" stroke="#fff" /> },
  { label: 'Object snap', on: true, width: 'w-6', icon: <path d="M3 3h12v12H3z" stroke="#fff" /> },
  {
    label: 'Lineweight',
    width: 'ml-2.5 w-7',
    icon: <path d="M2 2h12M2 6h12M2 10h12M2 14h12" stroke="#d9dce0" strokeWidth="2" />,
  },
  { label: 'Workspace switching', width: 'w-[26px]', icon: null },
  { label: 'Annotation monitor', width: 'ml-3 w-7', icon: <path d="M8 1v14M2 7h12" stroke="#d9dce0" strokeWidth="2" /> },
  { label: 'Annotation visibility', width: 'w-6', icon: <path d="M8 4l4 9H4z" stroke="#d9dce0" /> },
  { label: 'Isolate objects', width: 'w-7', icon: <path d="M0 5h7v9H0zM8 5h8v9H8z" fill="#c3c7cc" /> },
  { label: 'Hardware acceleration', width: 'w-[22px]', icon: <path d="M2 3h6v6H2zM7 8h8v7H7z" fill="#c3c7cc" stroke="#313944" /> },
  {
    label: 'Lock UI',
    on: true,
    width: 'w-6',
    icon: (
      <>
        <path d="M7 8h8v7H7z" fill="#fff" />
        <path d="M9 8V5h4v3M1 5v4h4" stroke="#fff" />
      </>
    ),
  },
  {
    label: 'Clean screen',
    width: 'w-6',
    icon: (
      <>
        <path d="M1 4h12M8 1v8" stroke="#5fa3cf" />
        <path d="M0 9h7v7H0z" fill="#c9923c" />
        <path d="M7 10l3 4 6-7" stroke="#4c9a58" strokeWidth="2" />
      </>
    ),
  },
  {
    label: 'Graphics status',
    width: 'w-6',
    icon: (
      <>
        <path d="M0 1h14v10H0z" fill="#8c9299" />
        <path d="M1 9l4-5 3 4 5-6" stroke="#3d4653" />
        <path d="M10 6l6 10H5z" fill="#b5653f" />
      </>
    ),
  },
];

function StatusBar() {
  return (
    <footer className="flex h-[29px] justify-between border-t border-b-2 border-t-[#4c525b] border-b-black bg-[#222932]">
      <div className="flex pl-3">
        {layoutTabs.map((t) => (
          <button
            key={t.label}
            className={`mr-1 h-[17px] rounded-b-lg text-center leading-4 ${t.width} ${
              t.label === 'Layout1' ? 'bg-[#3d4653] font-bold text-white' : 'bg-[#2b333e] text-[#b4b9c0]'
            }`}
          >
            {t.label}
          </button>
        ))}
        <button aria-label="New layout" className="ml-1 flex h-[17px] w-5 items-center justify-center rounded-b-lg bg-[#2b333e]">
          <Icon size={8}><path d="M4 0v8M0 4h8" stroke="#b4b9c0" strokeWidth="2" /></Icon>
        </button>
      </div>
      <div className="flex items-center">
        <output className="h-[22px] w-[150px] bg-[#363f4b] pr-[5px] text-right leading-[22px] text-gray-100">
          2030.72, 888.82, 0.00
        </output>
        <button className="mr-[3px] ml-[3px] h-[22px] w-[47px] bg-[#363f4b] text-gray-100">MODEL</button>
        {toggles.map((t) => (
          <span key={t.label} className="flex items-center">
            <button
              aria-label={t.label}
              className={`mr-px flex h-[22px] items-center justify-center ${t.width} ${t.on ? 'bg-[#4f86b5]' : 'bg-[#313944]'}`}
            >
              {t.icon ? <Icon>{t.icon}</Icon> : <FaCog size={14} className="text-[#d9dce0]" />}
            </button>
            {t.caret && <span className="flex w-3.5 justify-center"><Caret /></span>}
          </span>
        ))}
        <button aria-label="Customization" className="ml-1 flex h-[22px] w-6 items-center justify-center bg-[#313944]">
          <Icon><path d="M0 2h16M0 8h16M0 14h16" stroke="#e3e5e8" strokeWidth="2" /></Icon>
        </button>
      </div>
    </footer>
  );
}

/* ---------- view dialog ---------- */

function Group({ title, className, children }: { title: string; className: string; children: React.ReactNode }) {
  return (
    <fieldset className={`min-w-0 border border-[#dcdcdc] px-[7px] ${className}`}>
      <legend className="leading-4">{title}</legend>
      {children}
    </fieldset>
  );
}

type DialogButtonProps = { label: string; look?: string; width?: string; disabled?: boolean };

function DialogButton({
  label,
  look = 'border-[#adadad] bg-[#e1e1e1]',
  width = 'w-[84px]',
  disabled = false,
}: DialogButtonProps) {
  return (
    <button disabled={disabled} className={`h-[21px] shrink-0 border ${width} ${look}`}>
      {label}
    </button>
  );
}

function Check({ label, checked = false, accent = false }: { label: string; checked?: boolean; accent?: boolean }) {
  const color = accent ? 'border-[#0078d7]' : 'border-[#333]';
  return (
    <label className="flex h-4 items-center gap-0.5 whitespace-nowrap">
      <span className="relative flex">
        <input type="checkbox" defaultChecked={checked} className={`peer h-[13px] w-[13px] appearance-none border bg-white ${color}`} />
        <svg
          width="13"
          height="13"
          viewBox="0 0 13 13"
          className={`pointer-events-none absolute inset-0 hidden peer-checked:block ${accent ? 'text-[#0067b8]' : 'text-[#222]'}`}
        >
          <path d="M3 6l3 3 5-6" stroke="currentColor" fill="none" />
        </svg>
      </span>
      {label}
    </label>
  );
}

function ViewDialog() {
  return (
    <div
      role="dialog"
      aria-label="View"
      className="absolute top-[143px] left-[767px] w-[302px] bg-[#f0f0f0] pb-[11px] font-['DejaVu_Sans_Condensed','Liberation_Sans',sans-serif] text-[10px] text-[#111] shadow-[0_2px_8px_rgba(0,0,0,0.6)]"
    >
      <div className="flex h-[30px] items-center bg-white px-2.5">
        <svg width="13" height="13" viewBox="0 0 13 13" aria-hidden="true">
          <path d="M0 0h13v13H0z" fill="#fbe4e2" />
          <path d="M5 1h3l4 11H9L6 5l-2 7H1z" fill="#c4242e" />
          <path d="M2 9l8-2v2l-8 2z" fill="#a01c26" />
        </svg>
        <h2 className="ml-1.5 font-['Open_Sans',sans-serif] text-xs">View</h2>
        <button aria-label="Close dialog" className="ml-auto">
          <Icon size={11}><path d="M0 0l11 11M11 0L0 11" stroke="#111" /></Icon>
        </button>
      </div>
      <div className="flex flex-col px-[6px] pt-2.5 pl-[9px]">
        <Group title="Scale" className="h-[59px] pt-[5px]">
          <div className="flex items-center gap-1 pl-0.5">
            <label htmlFor="scale" className="w-[63px]">Scale:</label>
            <div className="relative flex items-center">
              <select
                id="scale"
                className="h-[21px] w-[70px] appearance-none border border-[#777] bg-white pl-[5px] outline-none"
              >
                <option>1:1</option>
              </select>
              <svg width="9" height="5" viewBox="0 0 9 5" className="pointer-events-none absolute right-1">
                <path d="M1 0l4 4 4-4" stroke="#444" fill="none" />
              </svg>
            </div>
            <DialogButton label="<" width="w-[21px]" />
          </div>
        </Group>
        <Group title="Modelspace" className="mt-0.5 h-[47px] pt-0.5">
          <div className="flex gap-[9px] pl-px">
            <DialogButton label="Border <" look="border-[#bfbfbf] bg-[#cccccc] text-[#8a8a8a]" disabled />
            <DialogButton label="Midpoint <" look="border-[#1d5a8c] bg-[#c2e2f6]" />
            <DialogButton label="Detach" />
          </div>
        </Group>
        <div className="mt-[3px] flex gap-[5px]">
          <Group title="Scale options" className="h-[85px] flex-1 pt-[13px]">
            <div className="flex flex-col gap-[13px] pl-[3px]">
              <Check label="Zoom according to scale" checked />
              <Check label="Perform rescaling" />
            </div>
          </Group>
          <Group title="Border" className="h-[85px] w-[106px] pt-[7px]">
            <div className="flex flex-col items-center gap-2.5">
              <DialogButton label="New <" />
              <DialogButton label="Move <" />
            </div>
          </Group>
        </div>
        <div className="mt-3 flex justify-between pr-7 pl-[11px]">
          <Check label="View active" checked accent />
          <Check label="Hidden lines (Hideplot)" />
        </div>
        <div className="mt-3 flex justify-between pr-px pl-px">
          <DialogButton label="OK" width="w-[73px]" look="border-2 border-[#0078d7] bg-[#e1e1e1]" />
          <DialogButton label="Cancel" width="w-[73px]" />
          <DialogButton label="Help" width="w-[73px]" />
        </div>
      </div>
      <svg width="13" height="19" viewBox="0 0 13 19" className="absolute top-[257px] left-[73px]" aria-hidden="true">
        <path d="M1 1v15l4-4 3 6 2-1-3-6h5z" fill="#fff" stroke="#222" />
      </svg>
    </div>
  );
}

function Watermark() {
  return (
    <div className="pointer-events-none absolute right-7 bottom-0.5 flex items-end gap-0.5">
      <span className="pb-0.5 text-[84px] leading-[76px] font-extrabold text-[#6b6a69]">thaco</span>
      <span className="flex h-[69px] w-[51px] items-center justify-center rounded-lg border-2 border-[#6b6b6b] bg-[#555]/20 text-[28px] font-extrabold text-white">
        ir
      </span>
    </div>
  );
}

export default function App() {
  return (
    <div className="relative flex min-h-screen flex-col overflow-hidden bg-[#222932] font-['Open_Sans','Noto_Sans',sans-serif] text-xs">
      <div className="flex">
        <AppLogo />
        <div className="flex-1">
          <TitleBar />
          <MenuTabs />
        </div>
      </div>
      <Ribbon />
      <FileTabs />
      <Canvas />
      <StatusBar />
      <ViewDialog />
      <Watermark />
    </div>
  );
}
